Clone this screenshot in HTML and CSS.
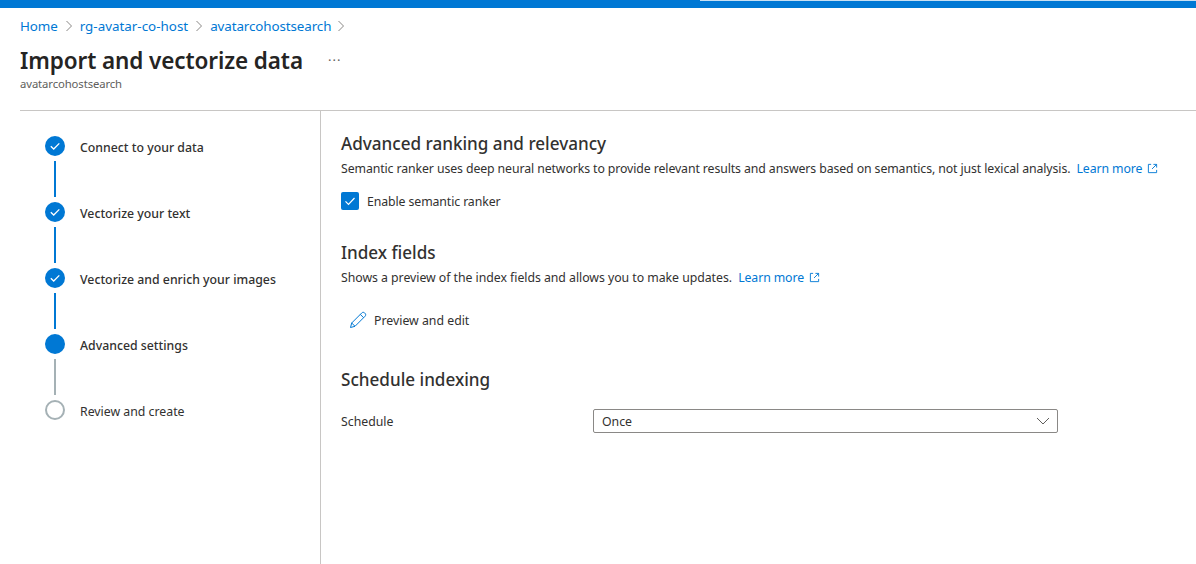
FILE: index.html
```html
<!DOCTYPE html>
<html lang="en">
<head>
<meta charset="utf-8">
<title>Import and vectorize data</title>
<link rel="stylesheet" href="styles.css">
</head>
<body>
<div class="topbar"><div class="progress-track"></div></div>
<nav class="breadcrumb">
  <a href="#">Home</a>
  <svg class="crumb-sep" viewBox="0 0 8 12"><path d="M1.5 1l5 5-5 5"/></svg>
  <a href="#" class="crumb-wide">rg-avatar-co-host</a>
  <svg class="crumb-sep" viewBox="0 0 8 12"><path d="M1.5 1l5 5-5 5"/></svg>
  <a href="#">avatarcohostsearch</a>
  <svg class="crumb-sep crumb-last" viewBox="0 0 8 12"><path d="M1.5 1l5 5-5 5"/></svg>
</nav>
<header class="page-head">
  <div class="title-row">
    <h1>Import and vectorize data</h1>
    <span class="more">···</span>
  </div>
  <div class="subtitle">avatarcohostsearch</div>
</header>
<main class="wizard">
  <aside class="steps">
    <div class="step">
      <div class="marker"><span class="dot done"><svg viewBox="0 0 20 20"><path d="M5.8 10.3l2.9 2.7 5.6-5.6"/></svg></span><span class="link done"></span></div>
      <div class="step-label strong">Connect to your data</div>
    </div>
    <div class="step">
      <div class="marker"><span class="dot done"><svg viewBox="0 0 20 20"><path d="M5.8 10.3l2.9 2.7 5.6-5.6"/></svg></span><span class="link done"></span></div>
      <div class="step-label strong">Vectorize your text</div>
    </div>
    <div class="step">
      <div class="marker"><span class="dot done"><svg viewBox="0 0 20 20"><path d="M5.8 10.3l2.9 2.7 5.6-5.6"/></svg></span><span class="link done"></span></div>
      <div class="step-label strong">Vectorize and enrich your images</div>
    </div>
    <div class="step">
      <div class="marker"><span class="dot done"></span><span class="link"></span></div>
      <div class="step-label strong">Advanced settings</div>
    </div>
    <div class="step">
      <div class="marker"><span class="dot todo"></span></div>
      <div class="step-label">Review and create</div>
    </div>
  </aside>
  <section class="content">
    <h2>Advanced ranking and relevancy</h2>
    <p class="desc">Semantic ranker uses deep neural networks to provide relevant results and answers based on semantics, not just lexical analysis. <a href="#" class="learn">Learn more<svg class="ext" viewBox="0 0 12 12"><path d="M4.5 1.5H1.5v9h9v-3M7 1.5h3.500v3.500M10.500 1.500L5.500 6.500"/></svg></a></p>
    <label class="check"><span class="box"><svg viewBox="0 0 18 18"><path d="M4.500 9.300l3 3 6-6.300"/></svg></span>Enable semantic ranker</label>
    <h2 class="second">Index fields</h2>
    <p class="desc desc-index">Shows a preview of the index fields and allows you to make updates. <a href="#" class="learn">Learn more<svg class="ext" viewBox="0 0 12 12"><path d="M4.5 1.5H1.5v9h9v-3M7 1.5h3.500v3.500M10.500 1.500L5.500 6.500"/></svg></a></p>
    <button class="edit" type="button"><svg viewBox="0 0 18 18"><path d="M1.500 16.500l1.200-4.500L12.800 1.900c.8-.8 2-.8 2.800 0l.5.5c.8.8.8 2 0 2.800L6 15.300zM2.700 12l3.300 3.300M11.300 3.400l3.300 3.300"/></svg>Preview and edit</button>
    <h2 class="third">Schedule indexing</h2>
    <div class="field">
      <div class="field-label">Schedule</div>
      <div class="select">Once<svg viewBox="0 0 14 8"><path d="M1 1l6 6 6-6"/></svg></div>
    </div>
  </section>
</main>
</body>
</html>
```
FILE: styles.css
```css
* { box-sizing: border-box; }
html, body { height: 100%; }
body {
  margin: 0;
  height: 564px;
  overflow: hidden;
  background: #fff;
  color: #323130;
  font-family: "Noto Sans", "Open Sans", sans-serif;
  font-size: 12.300px;
  display: flex;
  flex-direction: column;
}
a { color: #0078d4; text-decoration: none; }
.topbar { height: 8px; background: #0078d4; flex: none; display: flex; justify-content: flex-end; }
.progress-track { width: 496px; height: 1px; background: #c7e0f4; }
.breadcrumb { display: flex; align-items: center; height: 20px; margin: 8px 0 0 20px; font-size: 13.400px; letter-spacing: -0.1px; flex: none; }
.crumb-wide { letter-spacing: 0; }
.crumb-sep { width: 8px; height: 12px; margin: 0 7px; fill: none; stroke: #8a8886; stroke-width: 1; }
.crumb-last { margin-left: 6px; }
.page-head { padding-left: 20px; height: 74px; flex: none; }
.title-row { display: flex; align-items: center; height: 36px; margin-top: 6px; }
h1 { margin: 0; font-size: 22.500px; font-weight: 600; color: #252423; letter-spacing: -0.1px; }
.more { margin-left: 25px; color: #605e5c; font-size: 13px; letter-spacing: 1px; line-height: 1; }
.subtitle { font-size: 11.300px; color: #605e5c; line-height: 16px; margin-top: -2px; letter-spacing: -0.1px; }
.wizard { flex: 1; margin-left: 20px; border-top: 1px solid #c8c6c4; display: flex; min-height: 0; }
.steps { width: 301px; border-right: 1px solid #c8c6c4; padding: 25px 0 0 25px; flex: none; }
.step { display: flex; height: 66px; }
.marker { width: 20px; display: flex; flex-direction: column; align-items: center; flex: none; }
.dot { width: 20px; height: 20px; border-radius: 50%; flex: none; display: block; }
.dot svg { display: block; width: 20px; height: 20px; fill: none; stroke: #fff; stroke-width: 1.300; }
.dot.done { background: #0078d4; }
.dot.todo { border: 2px solid #a5b1b5; }
.link { width: 2px; height: 36px; margin-top: 5px; background: #a5b1b5; }
.link.done { background: #0078d4; }
.step-label { margin-left: 15px; padding-top: 2px; line-height: 20px; }
.step-label.strong { font-weight: 500; }
.content { padding: 21px 0 0 20px; flex: 1; min-width: 0; }
h2 { margin: 0; font-size: 17.100px; line-height: 24px; font-weight: 500; color: #323130; }
.desc { margin: 4px 0 0; line-height: 18px; white-space: nowrap; letter-spacing: -0.1px; }
.desc-index { margin-top: 4px; letter-spacing: -0.04px; }
.learn { margin-left: 3px; letter-spacing: -0.1px; }
.ext { width: 11px; height: 11px; margin-left: 5px; vertical-align: -1px; fill: none; stroke: #0078d4; stroke-width: 1; }
.check { display: flex; align-items: center; margin-top: 14px; height: 18px; letter-spacing: -0.1px; }
.box { width: 18px; height: 18px; margin-right: 8px; border-radius: 2px; background: #0078d4; flex: none; }
.box svg { display: block; width: 18px; height: 18px; fill: none; stroke: #fff; stroke-width: 1.200; }
.second { margin-top: 31px; }
.edit { display: flex; align-items: center; margin: 23px 0 0 8px; height: 20px; padding: 0; border: 0; background: none; color: #323130; font: inherit; }
.edit svg { width: 18px; height: 18px; margin-right: 7px; fill: none; stroke: #0078d4; stroke-width: 1; }
.third { margin-top: 38px; }
.field { display: flex; align-items: center; margin-top: 17px; }
.field-label { width: 252px; }
.select { width: 465px; height: 24px; border: 1px solid #8a8886; border-radius: 2px; padding: 0 8px; display: flex; align-items: center; justify-content: space-between; }
.select svg { width: 14px; height: 8px; margin-right: -1px; fill: none; stroke: #605e5c; stroke-width: 1; }
```
